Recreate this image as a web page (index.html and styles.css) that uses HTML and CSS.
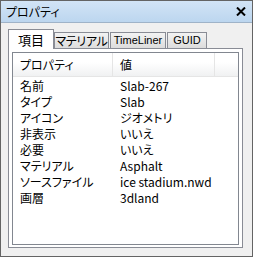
FILE: index.html
```html
<!DOCTYPE html>
<html lang="ja">
<head>
<meta charset="utf-8">
<link rel="stylesheet" href="styles.css">
</head>
<body>
<div class="window">
  <div class="titlebar">
    <span class="title">プロパティ</span>
    <svg class="close" width="10" height="9" viewBox="0 0 10 9"><path d="M1 0.5 L9 8.5 M9 0.5 L1 8.5" stroke="#000" stroke-width="2" fill="none"/></svg>
  </div>
  <div class="body">
    <div class="tabs">
      <div class="tab active">項目</div>
      <div class="tab t-mat">マテリアル</div>
      <div class="tab t-time">TimeLiner</div>
      <div class="tab t-guid">GUID</div>
    </div>
    <div class="panel">
      <div class="list">
        <div class="header">
          <div class="hc c1">プロパティ</div>
          <div class="hc c2">値</div>
          <div class="hc c3"></div>
        </div>
        <div class="rows">
          <div class="row"><span class="k">名前</span><span class="v">Slab-267</span></div>
          <div class="row"><span class="k">タイプ</span><span class="v">Slab</span></div>
          <div class="row"><span class="k">アイコン</span><span class="v">ジオメトリ</span></div>
          <div class="row"><span class="k">非表示</span><span class="v">いいえ</span></div>
          <div class="row"><span class="k">必要</span><span class="v">いいえ</span></div>
          <div class="row"><span class="k">マテリアル</span><span class="v">Asphalt</span></div>
          <div class="row"><span class="k">ソースファイル</span><span class="v">ice stadium.nwd</span></div>
          <div class="row"><span class="k">画層</span><span class="v">3dland</span></div>
        </div>
      </div>
    </div>
  </div>
</div>
</body>
</html>
```
FILE: styles.css
```css
* { box-sizing: border-box; }
html, body { margin: 0; padding: 0; background: #f0f0f0; }
body {
  font-family: "Noto Sans CJK JP", "Noto Sans", sans-serif;
  font-size: 12px;
  color: #000;
  font-feature-settings: "palt";
}
.window {
  width: 253px;
  height: 257px;
  border: 1px solid #646464;
  background: #f0f0f0;
  display: flex;
  flex-direction: column;
}
.titlebar {
  height: 22px;
  background: linear-gradient(#d2e4f6, #bcd6ef);
  border-bottom: 1px solid #9fb3c8;
  display: flex;
  align-items: center;
  justify-content: space-between;
  padding: 0 6px 0 5px;
}
.title { font-size: 12px; line-height: 14px; }
.close { display: block; }
.body {
  padding: 6px 9px 0 7px;
  flex: 1;
}
.tabs {
  display: flex;
  align-items: flex-end;
  height: 19px;
}
.tab {
  border: 1px solid #898c95;
  border-bottom: none;
  height: 16px;
  background: linear-gradient(#f3f3f3, #dcdcdc);
  font-size: 12px;
  line-height: 15px;
  text-align: center;
  margin-right: 1px;
  white-space: nowrap;
  overflow: hidden;
}
.tab.active {
  position: relative;
  z-index: 1;
  height: 20px;
  margin-bottom: -1px;
  background: #fff;
  width: 46px;
  font-size: 13px;
  line-height: 19px;
  margin-right: 0;
}
.t-mat { width: 55px; letter-spacing: -0.3px; }
.t-time { width: 56px; font-family: "Liberation Sans", sans-serif; font-size: 11px; }
.t-guid { width: 40px; font-family: "Liberation Sans", sans-serif; font-size: 11px; }
.panel {
  width: 235px;
  height: 200px;
  border: 1px solid #898c95;
  background: #fff;
  padding: 3px 3px 2px 3px;
}
.list {
  border: 1px solid #828790;
  height: 100%;
  background: #fff;
}
.header {
  display: flex;
  height: 24px;
  background: linear-gradient(#ffffff 40%, #f0f1f2);
  border-bottom: 1px solid #e5e5e5;
}
.hc {
  line-height: 23px;
  padding-left: 7px;
  border-right: 1px solid #e5e5e5;
  white-space: nowrap;
}
.c1 { width: 100px; }
.c2 { width: 102px; }
.c3 { flex: 1; border-right: none; }
.rows { padding-top: 1px; }
.row {
  display: flex;
  height: 16px;
  line-height: 16px;
  white-space: nowrap;
}
.k { width: 100px; padding-left: 7px; }
.v { padding-left: 7px; }
```
